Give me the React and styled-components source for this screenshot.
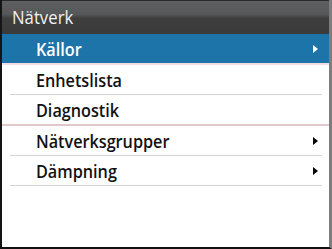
import React from 'react'
import styled, { createGlobalStyle } from 'styled-components'

const Global = createGlobalStyle`
    html, body {
        margin: 0;
        padding: 0;
        background: #fff;
    }
    * {
        box-sizing: border-box;
    }
`

const items = [
    { label: 'Källor', arrow: true, selected: true, divider: 'pink' },
    { label: 'Enhetslista', divider: 'thin' },
    { label: 'Diagnostik', divider: 'thick' },
    { label: 'Nätverksgrupper', arrow: true, divider: 'thin' },
    { label: 'Dämpning', arrow: true, divider: 'thin' },
]

function Arrow(props) {
    return (
        <ArrowIcon width="5" height="8" viewBox="0 0 5 8">
            <path d="M0 0 L5 4 L0 8 Z" fill={props.color} />
        </ArrowIcon>
    )
}

export default function App() {
    return (
        <Frame>
            <Global />
            <Header><Title>Nätverk</Title></Header>
            <List>
                {items.map(item => {
                    return (
                        <Row key={item.label} $selected={item.selected} $divider={item.divider}>
                            <Label>{item.label}</Label>
                            {item.arrow && <Arrow color={item.selected ? '#fff' : '#000'} />}
                        </Row>
                    )
                })}
            </List>
        </Frame>
    )
}

const Frame = styled.div`
    width: 332px;
    height: 249px;
    display: flex;
    flex-direction: column;
    background: #fff;
    border-left: 2px solid #141414;
    border-right: 3px solid #7d7d7d;
    border-bottom: 2px solid #111;
    font-family: "Open Sans", "Noto Sans", sans-serif;
    overflow: hidden;
`

const Header = styled.div`
    height: 34px;
    display: flex;
    align-items: center;
    padding: 0 0 1px 10px;
    background: linear-gradient(#5e5f60 0%, #56575a 40%, #3e3e3e 52%, #3a3a3a 100%);
    border-top: 1px solid #2a2a2a;
`

const Title = styled.span`
    display: inline-block;
    color: #f2f2f2;
    font-size: 18px;
    transform: scaleX(0.93);
    transform-origin: left center;
`

const List = styled.div`
    display: flex;
    flex-direction: column;
`

const Row = styled.div`
    position: relative;
    height: ${p => p.$divider === 'thin' ? 30 : 31}px;
    display: flex;
    align-items: center;
    justify-content: space-between;
    padding: 0 11px 0 34px;
    background: ${p => p.$selected ? '#1c74a8' : '#fff'};
    color: ${p => p.$selected ? '#fff' : '#111'};
    border-bottom: ${p => p.$divider === 'pink' ? '2px solid #f3dde1' : '2px solid #e2c7cb'};

    ${p => p.$divider === 'thin' && `
        border-bottom: none;
        &::after {
            content: '';
            position: absolute;
            left: 8px;
            right: 7px;
            bottom: 0;
            height: 1px;
            background: #ddd2d3;
        }
    `}
`

const Label = styled.span`
    display: inline-block;
    font-size: 18px;
    font-weight: 600;
    transform: scaleX(0.9);
    transform-origin: left center;
`

const ArrowIcon = styled.svg`
    display: block;
`
